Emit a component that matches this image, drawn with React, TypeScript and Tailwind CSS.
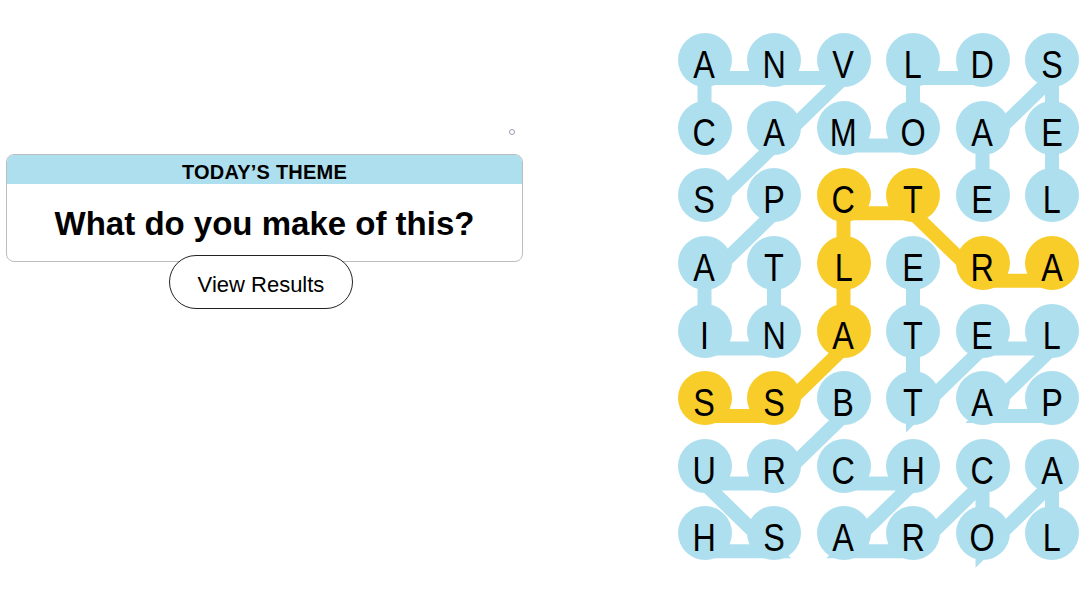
import React from "react";

const GRID = [
  "ANVLDS",
  "CAMOAE",
  "SPCTEL",
  "ATLERA",
  "INATEL",
  "SSBTAP",
  "URCHCA",
  "HSAROL",
];

type P = [number, number];

const BLUE = "#aedfee";
const YELLOW = "#f8cd2a";

const SPANGRAM: P[] = [
  [3, 5], [3, 4], [2, 3], [2, 2], [3, 2], [4, 2], [5, 1], [5, 0],
];

const WORDS: P[][] = [
  [[1, 0], [0, 0], [0, 1], [0, 2], [1, 1], [2, 0]],
  [[1, 2], [1, 3], [0, 3], [0, 4]],
  [[2, 4], [1, 4], [0, 5], [1, 5], [2, 5]],
  [[2, 1], [3, 0], [4, 0], [4, 1], [3, 1]],
  [[5, 5], [5, 4], [4, 5], [4, 4], [5, 3], [4, 3], [3, 3]],
  [[5, 2], [6, 1], [6, 0], [7, 1], [7, 0]],
  [[6, 2], [6, 3], [7, 2], [7, 3], [6, 4], [7, 4], [6, 5], [7, 5]],
];

const yellowSet = new Set(SPANGRAM.map(([r, c]) => `${r}-${c}`));

function pt([r, c]: P) {
  const x = 27 + 69.5 * c - 0.5;
  const y = 27 + 67.6 * r + 18;
  return `${x},${y}`;
}

function Board() {
  return (
    <div className="relative">
      <svg
        className="absolute left-0 top-0"
        width={402}
        height={560}
        viewBox="0 0 402 560"
      >
        {WORDS.map((w, i) => (
          <polyline
            key={i}
            points={w.map(pt).join(" ")}
            fill="none"
            stroke={BLUE}
            strokeWidth={14}
            strokeLinejoin="miter"
            strokeLinecap="butt"
          />
        ))}
        <polyline
          points={SPANGRAM.map(pt).join(" ")}
          fill="none"
          stroke={YELLOW}
          strokeWidth={14}
          strokeLinejoin="miter"
          strokeLinecap="butt"
        />
      </svg>
      <div className="grid grid-cols-[repeat(6,54px)] gap-x-[15.5px] gap-y-[13.6px]">
        {GRID.flatMap((row, r) =>
          row.split("").map((ch, c) => {
            const y = yellowSet.has(`${r}-${c}`);
            return (
              <div
                key={`${r}-${c}`}
                className={
                  "relative flex h-[54px] w-[54px] items-center justify-center rounded-full " +
                  (y ? "bg-[#f8cd2a]" : "bg-[#aedfee]")
                }
              >
                <span className="mt-[9px] inline-block scale-x-[0.83] font-['Liberation_Sans',Arial,sans-serif] text-[39px] leading-none text-black">
                  {ch}
                </span>
              </div>
            );
          })
        )}
      </div>
    </div>
  );
}

export default function App() {
  return (
    <div className="flex h-[614px] w-[1091px] overflow-hidden bg-white font-['Liberation_Sans',Arial,sans-serif]">
      <div className="w-[677.5px] shrink-0 pl-[6px] pt-[129px]">
        <div className="flex w-[517px] justify-end pr-[8px]">
          <div className="h-[6px] w-[6px] rounded-full border border-[#9a9ab4]" />
        </div>
        <div className="mt-[19px] w-[517px] overflow-hidden rounded-lg border border-[#bdbdbd]">
          <div className="h-[29px] bg-[#aedfee] text-center text-[20px] font-bold leading-[34px] tracking-[0.01em] text-black">
            TODAY’S THEME
          </div>
          <div className="flex h-[77px] items-center justify-center pt-[2px] text-[33px] font-bold text-black">
            What do you make of this?
          </div>
        </div>
        <button className="relative -mt-[7px] ml-[163px] flex h-[54px] w-[184px] items-center justify-center rounded-full border border-[#222] bg-white pt-[4px] text-[22px] text-black">
          View Results
        </button>
      </div>
      <div className="pt-[33.3px]">
        <Board />
      </div>
    </div>
  );
}
